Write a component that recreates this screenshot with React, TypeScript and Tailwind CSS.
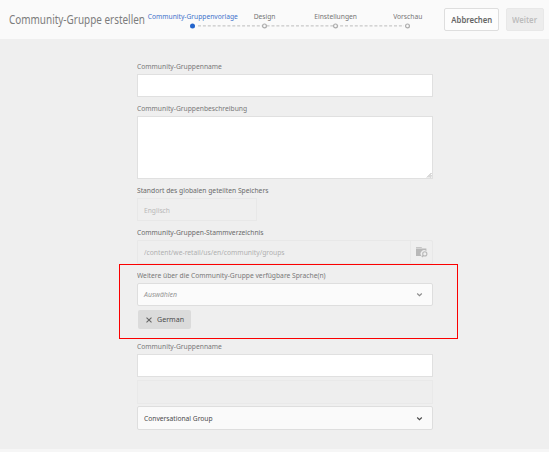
import type { ReactNode } from 'react';

const steps = [
  { label: 'Community-Gruppenvorlage', active: true, tone: 'text-[#3f72cb] scale-x-[.868]' },
  { label: 'Design', active: false, tone: 'text-[#757575] scale-x-[.87]' },
  { label: 'Einstellungen', active: false, tone: 'text-[#757575] scale-x-[.87]' },
  { label: 'Vorschau', active: false, tone: 'text-[#757575] scale-x-[.87]' },
];

function Stepper() {
  return (
    <ol className="relative ml-[12px] grid h-[39px] w-[286px] shrink-0 grid-cols-4">
      <svg className="absolute left-[36px] top-[25px]" width="216" height="2" aria-hidden="true">
        <path d="M5 .9H211" stroke="#bcbcbc" strokeWidth="1" strokeDasharray="3 1.9" />
      </svg>
      {steps.map((step) => (
        <li key={step.label} className="relative flex flex-col items-center pt-[10px]">
          <span className={`block h-[12px] whitespace-nowrap text-[7.7px] leading-[12px] ${step.tone}`}>{step.label}</span>
          <svg className="mt-[1px]" width="7" height="7" viewBox="0 0 7 7" aria-hidden="true">
            {step.active ? (
              <circle cx="3.5" cy="2.9" r="2.5" fill="#2364cc" />
            ) : (
              <circle cx="3.5" cy="2.9" r="1.9" fill="#fafafa" stroke="#ababab" strokeWidth="1.2" />
            )}
          </svg>
        </li>
      ))}
    </ol>
  );
}

function Label({ children, className = 'text-[#787878]' }: { children: ReactNode; className?: string }) {
  return (
    <label className={`block h-[16px] origin-left scale-x-[.873] whitespace-nowrap text-[7.7px] leading-[16px] ${className}`}>
      {children}
    </label>
  );
}

function Chevron({ color }: { color: string }) {
  return (
    <svg width="7" height="5" viewBox="0 0 7 5" fill="none" aria-hidden="true">
      <path d="M1.2 1.5 3.5 3.6 5.8 1.5" stroke={color} strokeWidth="1.2" />
    </svg>
  );
}

export default function App() {
  return (
    <div className="flex h-[452px] w-[549px] flex-col overflow-hidden bg-[#f6f6f6] font-['Noto_Sans','Open_Sans',sans-serif]">
      <header className="flex h-[39px] shrink-0 items-start bg-[#fafafa]">
        <h1 className="ml-[9px] w-[136px] shrink-0 origin-left scale-x-[.85] whitespace-nowrap text-[11.7px] font-normal leading-[39px] text-[#7c7c7c]">
          Community-Gruppe erstellen
        </h1>
        <Stepper />
        <button className="ml-[1px] mt-[8px] flex h-[23px] w-[55px] shrink-0 justify-center rounded-[2px] border border-[#dedede] bg-[#fdfdfd] text-[9px] font-semibold leading-[21px] text-[#666666]">
          <span className="block scale-x-[.86]">Abbrechen</span>
        </button>
        <button className="ml-[7px] mt-[8px] flex h-[23px] w-[38px] shrink-0 justify-center rounded-[2px] border border-[#e8e8e8] bg-[#ededed] text-[9px] font-semibold leading-[21px] text-[#bcbcbc]">
          <span className="block scale-x-[.86]">Weiter</span>
        </button>
      </header>

      <main className="flex h-[410px] shrink-0 flex-col bg-[#efefef] pl-[137px] pt-[19px]">
        <div className="flex w-[296px] flex-col">
          <Label>Community-Gruppenname</Label>
          <div className="h-[23px] border border-[#e0e0e0] bg-white" />

          <Label className="mt-[3px] text-[#787878]">Community-Gruppenbeschreibung</Label>
          <div className="flex h-[63px] items-end justify-end border border-[#e0e0e0] bg-white">
            <svg width="6" height="6" viewBox="0 0 6 6" aria-hidden="true">
              <path d="M1 5.5 5.5 1M3 5.5 5.5 3M4.6 5.7 5.7 4.6" stroke="#aaa" strokeWidth=".9" />
            </svg>
          </div>

          <Label className="mt-[3px] text-[#6a6a6a]">Standort des globalen geteilten Speichers</Label>
          <div className="h-[23px] w-[120px] border border-[#e8e8e8] pl-[6px] text-[7.7px] leading-[22px] text-[#b8b8b8]">
            <span className="block origin-left scale-x-[.87]">Englisch</span>
          </div>

          <Label className="mt-[3px] text-[#6a6a6a]">Community-Gruppen-Stammverzeichnis</Label>
          <div className="flex h-[24px] rounded-r-[2px] border border-[#e8e8e8]">
            <span className="ml-[6px] block w-[200px] origin-left scale-x-[.878] text-[7.7px] leading-[23px] text-[#b0b0b0]">
              /content/we-retail/us/en/community/groups
            </span>
            <span className="ml-auto flex w-[22px] items-center justify-center border-l border-[#e8e8e8]">
              <svg width="13" height="12" viewBox="0 0 13 12" aria-hidden="true">
                <path d="M1 .9H6.4L7.2 1.8H1ZM1 2.6H11.4V5.2A3.2 3.2 0 0 0 6.6 9.9H1Z" fill="#b8b8b8" />
                <circle cx="9.8" cy="7.9" r="2.1" fill="#efefef" stroke="#b8b8b8" strokeWidth="1.1" />
                <path d="M8.2 9.5 6.9 11" stroke="#b8b8b8" strokeWidth="1.2" />
              </svg>
            </span>
          </div>

          <Label className="mt-[3px] text-[#787878]">Weitere über die Community-Gruppe verfügbare Sprache(n)</Label>
          <div className="flex h-[23px] items-center justify-between rounded-[2px] border border-[#dedede] bg-[#fbfbfb] pl-[6px] pr-[9px]">
            <span className="block origin-left scale-x-[.9] text-[7.7px] italic leading-[21px] text-[#959595]">Auswählen</span>
            <Chevron color="#8c8c8c" />
          </div>
          <div className="ml-[1px] mt-[4px] flex h-[19px] w-[53px] items-center rounded-[2px] bg-[#dbdbdb] pl-[8px]">
            <svg width="6" height="6" viewBox="0 0 6 6" aria-hidden="true">
              <path d="M.5.6 5.5 5.4M5.5.6.5 5.4" stroke="#666" strokeWidth="1.1" />
            </svg>
            <span className="ml-[5px] block origin-left scale-x-[.91] text-[7.8px] leading-[19px] text-[#4b4b4b]">German</span>
          </div>

          <Label className="mt-[9px] text-[#787878]">Community-Gruppenname</Label>
          <div className="h-[23px] border border-[#e0e0e0] bg-white" />
          <div className="mt-[3px] h-[24px] border border-[#e9e9e9] bg-[#eeeeee]" />
          <div className="mt-[2px] flex h-[24px] items-center justify-between rounded-[2px] border border-[#dedede] bg-[#fafafa] pl-[6px] pr-[9px]">
            <span className="block origin-left scale-x-[.87] text-[7.7px] leading-[22px] text-[#4b4b4b]">Conversational Group</span>
            <Chevron color="#4b4b4b" />
          </div>
        </div>
      </main>

      <div className="pointer-events-none absolute left-[119px] top-[264px] h-[75px] w-[339px] border border-[#fb0000]" />
    </div>
  );
}
